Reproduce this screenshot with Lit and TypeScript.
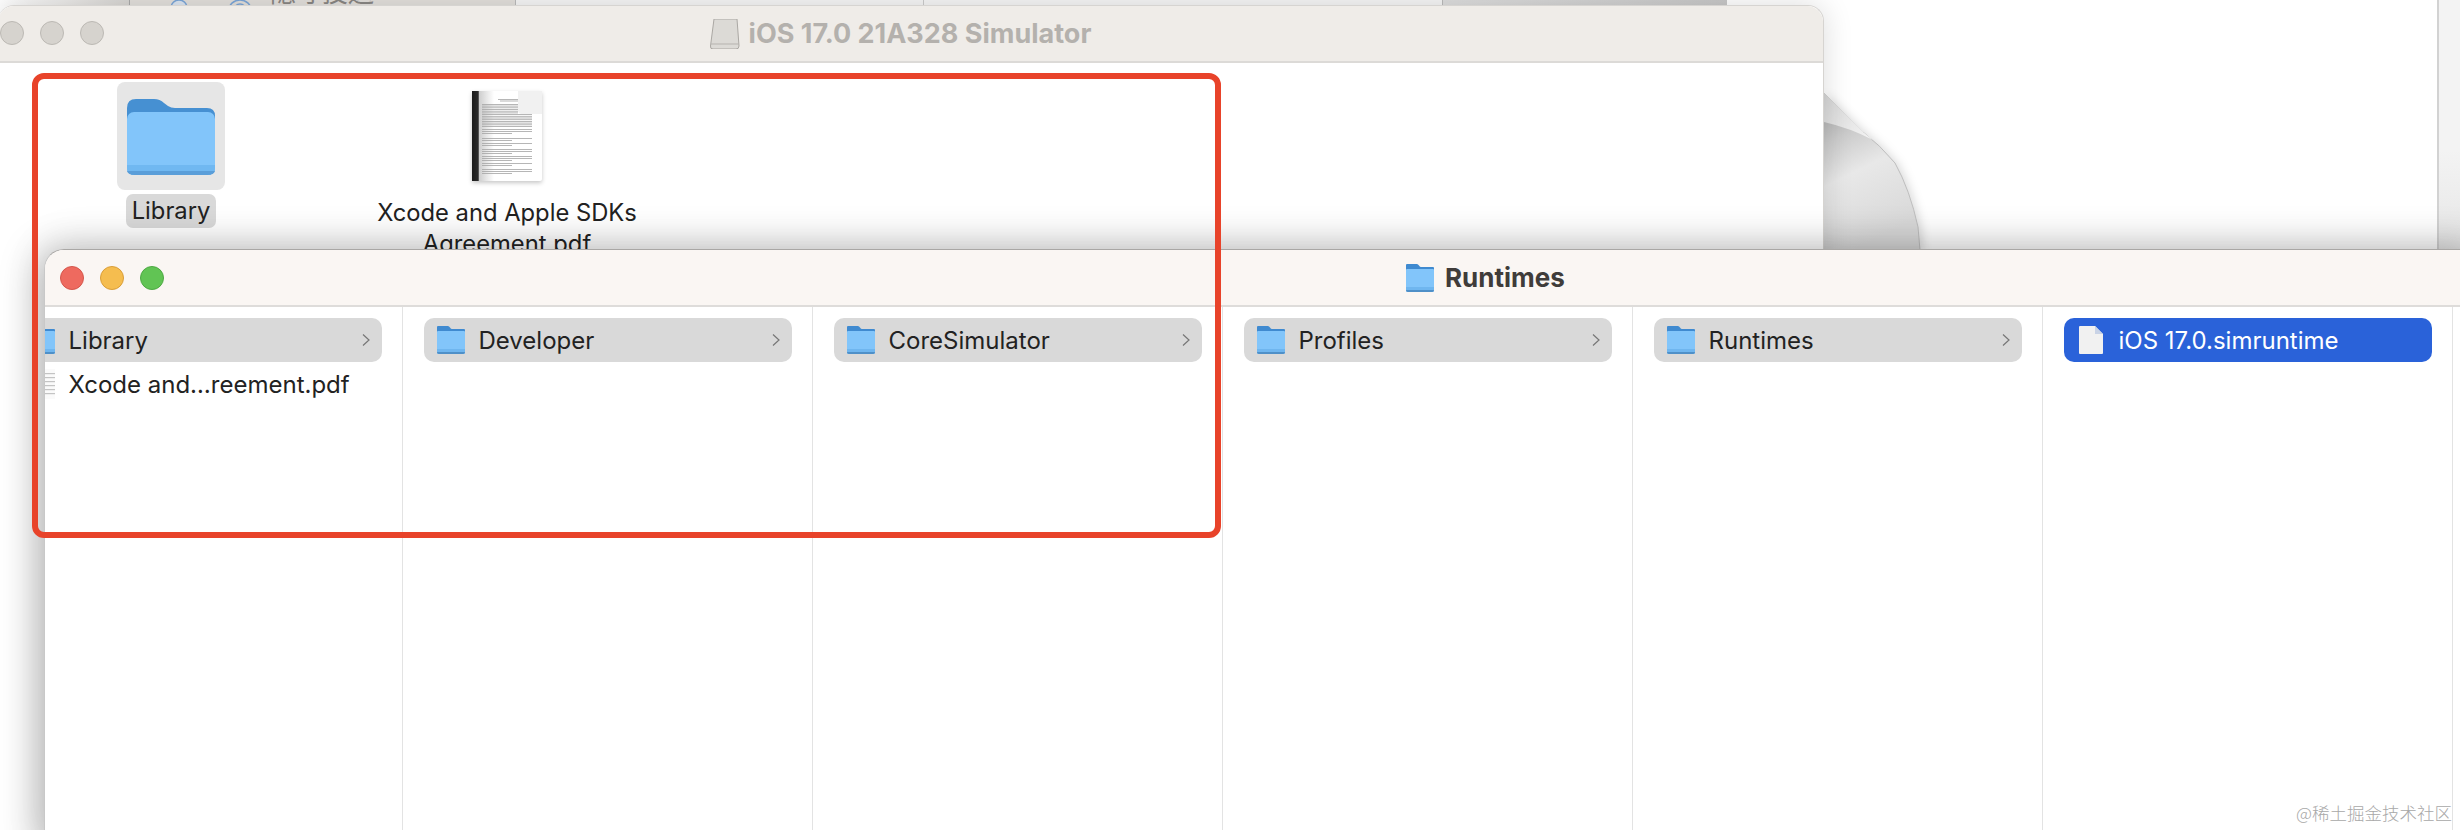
import { LitElement, html, css, svg } from "lit";
import { customElement } from "lit/decorators.js";

const folder = () => html`<svg class="bigf" viewBox="0 0 88 76">
  ${svg`<path d="M0 9 Q0 0 9 0 H27 Q33 0 37 4 L41 7 Q44 9 48 9 H80 Q88 9 88 17 V68 Q88 76 80 76 H8 Q0 76 0 68Z" fill="#4690d2"/>
  <rect x="0" y="13" width="88" height="63" rx="7" fill="#82c5fa"/>
  <path d="M0 66 H88 V69 Q88 76 80 76 H8 Q0 76 0 69Z" fill="#70b8f1"/>
  <path d="M0 72 Q1 76 8 76 H80 Q87 76 88 72Z" fill="#5a9ed9"/>`}
</svg>`;

const smallFolder = (cls: string) => html`<svg class=${cls} viewBox="0 0 28 28">
  ${svg`<path d="M0 1 Q0 0 1 0 H11 Q12 0 13 1.5 Q14 3 15 3 H27 Q28 3 28 4 V10 H0Z" fill="#3f8ad0"/>
  <path d="M0 6 Q0 5 1 5 H27 Q28 5 28 6 V26 Q28 28 26 28 H2 Q0 28 0 26Z" fill="#82c5fa"/>
  <path d="M0 23 H28 V26 Q28 28 26 28 H2 Q0 28 0 26Z" fill="#6fb6ef"/>
  <path d="M0 26 Q0 28 2 28 H26 Q28 28 28 26Z" fill="#4f90c8"/>`}
</svg>`;

const chevron = () => html`<svg class="chev" viewBox="0 0 8 12"><path d="M1 .5 L7 6 L1 11.5" fill="none" stroke="#777" stroke-width="1.2"/></svg>`;

// Page lines of the PDF thumbnail: [y, x, width]
const docLines: number[][] = [[8, 26, 24], [9.6, 28, 20]];
for (let y = 13; y < 36; y += 1.7) docLines.push([y, 10, y < 22 ? 36 : 50]);
for (const [a, b] of [[38, 44], [47, 50], [52, 56], [58, 63], [65, 70], [72, 76], [78, 83]]) {
  for (let y = a; y < b; y += 2) docLines.push([y, 10, y + 2 >= b ? 30 : 50]);
}

@customElement("app-root")
export class AppRoot extends LitElement {
  static styles = css`
    :host { display: block; position: relative; width: 2460px; height: 830px; overflow: hidden; background: #fff;
      font-family: Inter, "Liberation Sans", "Noto Sans CJK SC", sans-serif; color: #222; }
    .behind { position: absolute; left: 0; top: 0; width: 2460px; height: 6px; overflow: hidden; display: flex; }
    .seg { height: 6px; flex: none; box-sizing: border-box; }
    .s0 { width: 130px; background: linear-gradient(90deg, #fff, #d8d6d3); border-right: 1px solid #aaa; }
    .s1 { width: 386px; background: #e3e0dc; border-right: 1px solid #bbb; display: flex; align-items: flex-start; padding-left: 40px; }
    .s1 svg { flex: none; }
    .s1 svg.a { width: 18px; height: 6px; margin-right: 40px; }
    .s1 svg.b { width: 24px; height: 6px; margin-right: 18px; }
    .s1 span { font-size: 26px; line-height: 26px; color: #8a8784; margin-top: -20px; white-space: nowrap; }
    .s2 { width: 408px; background: #f6f6f6; border-right: 1px solid #ccc; }
    .s3 { width: 519px; background: #f6f6f6; border-right: 1px solid #bbb; }
    .s4 { width: 284px; background: linear-gradient(90deg, #dedede, #c8c8c8); }
    .rstrip { position: absolute; left: 2437px; top: 0; width: 23px; height: 250px; box-sizing: border-box; border-left: 2px solid #d2d2d2;
      background: linear-gradient(180deg, #f3f3f3, #f3f3f3 60%, #e6e6e6); }
    .curl { position: absolute; left: 1800px; top: 60px; width: 140px; height: 200px; filter: drop-shadow(3px 1px 5px rgba(0,0,0,.14)); }
    .back { position: absolute; left: -2px; top: 5px; width: 1826px; height: 900px; box-sizing: border-box; background: #fff;
      border-radius: 16px 16px 0 0; box-shadow: 0 0 30px rgba(0,0,0,.14); border: 1px solid #d6d4d1; border-width: 1px 1px 0 0; }
    .back .bar { height: 55px; background: #efece8; border-bottom: 2px solid #dcdad7; border-radius: 16px 16px 0 0;
      display: flex; align-items: center; justify-content: center; position: relative; }
    .lights { position: absolute; display: flex; gap: 16px; }
    .back .lights { left: 2px; top: 15px; }
    .light { width: 24px; height: 24px; box-sizing: border-box; border-radius: 50%; border: 1px solid #bcb9b4; background: #d6d3ce; }
    .title { display: flex; align-items: center; justify-content: center; gap: 9px; font-weight: 700; }
    .back .title { font-size: 27px; color: #b4b1ad; margin-right: 20px; }
    .drive { width: 30px; height: 30px; }
    .icons { display: flex; padding-top: 19px; }
    .desk-a { width: 190px; margin-left: 78px; display: flex; flex-direction: column; align-items: center; }
    .tile { width: 108px; height: 108px; background: #e6e6e6; border-radius: 8px; display: flex; align-items: center; justify-content: center; }
    .bigf { width: 88px; height: 76px; margin-top: 2px; }
    .lab { margin-top: 4px; padding: 0 6px; font-size: 23.75px; line-height: 34px; background: #d9d9d9; border-radius: 7px; }
    .desk-b { width: 330px; margin-left: 76px; display: flex; flex-direction: column; align-items: center; text-align: center; font-size: 23.75px; line-height: 31px; }
    .doc { width: 70px; height: 90px; margin: 9px 0 16px; filter: drop-shadow(0 2px 2px rgba(0,0,0,.22)); }
    .front { position: absolute; left: 44px; top: 249px; width: 2440px; height: 600px; background: #fff; border-radius: 20px 0 0 0;
      box-shadow: -6px 2px 38px rgba(0,0,0,.28), 0 -8px 44px rgba(0,0,0,.08); overflow: hidden; box-sizing: border-box; border-top: 1px solid #a9a7a5; border-left: 1px solid #c8c8c8; }
    .front .bar { height: 55px; background: #faf6f3; border-bottom: 2px solid #dedcda; position: relative; display: flex; align-items: center; }
    .front .lights { left: 15px; top: 16px; }
    .front .light.r { background: #ee6a5f; border-color: #d4574c; }
    .front .light.y { background: #f5bd4f; border-color: #d99e39; }
    .front .light.g { background: #61c454; border-color: #4ea944; }
    .front .title { position: absolute; left: 1361px; font-size: 26px; color: #3f3c3a; gap: 11px; }
    .tf { width: 28px; height: 28px; }
    .cols { display: flex; margin-left: -52px; height: 530px; }
    .col { width: 410px; flex: none; box-sizing: border-box; border-right: 1px solid #e3e3e3; padding: 11px 20px 0 21px; }
    .row { height: 44px; display: flex; align-items: center; padding: 0 12px 0 13px; border-radius: 10px; font-size: 24px; white-space: nowrap; }
    .row.sel { background: #d9d9d9; }
    .row.act { background: #2a62d9; color: #fff; }
    .row .name { flex: 1; margin-left: 13.5px; }
    .fi { width: 28px; height: 28px; flex: none; }
    .chev { width: 8px; height: 12px; flex: none; }
    .fileic { width: 24px; height: 28px; margin: 0 2px; flex: none; }
    .smalldoc { width: 28px; height: 30px; flex: none; }
    .red { position: absolute; left: 32px; top: 73px; width: 1189px; height: 465px; box-sizing: border-box; border: 6px solid #e8432a; border-radius: 12px; pointer-events: none; }
    .wm { position: absolute; right: 8px; bottom: 6px; font-family: "Noto Sans CJK SC", sans-serif; font-size: 17.5px; line-height: 22px; color: #a8a8a8; font-weight: 300; }
  `;

  private row(name: string) {
    return html`<div class="row sel">${smallFolder("fi")}<span class="name">${name}</span>${chevron()}</div>`;
  }

  render() {
    return html`
      <div class="behind">
        <div class="seg s0"></div>
        <div class="seg s1">
          <svg class="a" viewBox="0 0 18 6"><path d="M1 8 A8 8 0 0 1 17 8" fill="#dce6f2" stroke="#7ba6d8" stroke-width="1.5"/></svg>
          <svg class="b" viewBox="0 0 24 6"><path d="M1 10 A11 10 0 0 1 23 10" fill="none" stroke="#7ba6d8" stroke-width="1.5"/><path d="M6 10 A6 6 0 0 1 18 10" fill="none" stroke="#7ba6d8" stroke-width="1.5"/></svg>
          <span>隐守投送</span>
        </div>
        <div class="seg s2"></div>
        <div class="seg s3"></div>
        <div class="seg s4"></div>
      </div>
      <div class="rstrip"></div>
      <svg class="curl" viewBox="0 0 140 200">
        <defs>
          <linearGradient id="cg" x1="0" y1="0" x2=".3" y2="1"><stop offset="0" stop-color="#9c9c9c"/><stop offset=".3" stop-color="#cbcbcb"/><stop offset=".55" stop-color="#e8e8e8"/><stop offset="1" stop-color="#d8d8d8"/></linearGradient>
          <linearGradient id="fg" x1="0" y1="0" x2="1" y2="1"><stop offset="0" stop-color="#d4d4d4"/><stop offset="1" stop-color="#f4f4f4"/></linearGradient>
        </defs>
        <path d="M24 33 L63 72 Q80 85 95 103 Q110 130 118 167 L120 190 H24Z" fill="url(#cg)"/>
        <path d="M63 72 Q80 85 95 103 Q110 130 118 167 L120 190" fill="none" stroke="#bdbdbd" stroke-width="1"/>
        <path d="M24 33 L63 72 L73 80 Q50 68 24 62Z" fill="url(#fg)"/>
      </svg>
      <div class="back">
        <div class="bar">
          <div class="lights"><i class="light"></i><i class="light"></i><i class="light"></i></div>
          <div class="title">
            <svg class="drive" viewBox="0 0 30 30"><path d="M4 0 H27 L29 27 Q29 30 26 30 H3 Q0 30 0.5 27Z" fill="#dcdad6" stroke="#aaa7a3"/><path d="M1 25 H29" stroke="#b6b3af" stroke-width="1"/></svg>
            <span>iOS 17.0 21A328 Simulator</span>
          </div>
        </div>
        <div class="icons">
          <div class="desk-a"><div class="tile">${folder()}</div><span class="lab">Library</span></div>
          <div class="desk-b">
            <svg class="doc" viewBox="0 0 70 90">
              <defs><linearGradient id="sp" x1="0" x2="1" y1="0" y2="0"><stop offset="0" stop-color="#1c1c1c"/><stop offset=".28" stop-color="#2c2c2c"/><stop offset=".34" stop-color="#cfcfcf"/><stop offset="1" stop-color="#fff"/></linearGradient></defs>
              <rect width="70" height="90" rx="2" fill="#fff"/>
              <rect width="22" height="90" fill="url(#sp)"/>
              ${docLines.map(([y, x, w]) => svg`<rect x=${x} y=${y} width=${w} height=".8" fill="#a4a4a4"/>`)}
              <path d="M46 0 H70 V23 H50 Q46 23 46 19Z" fill="#f1f1f1"/>
            </svg>
            <span>Xcode and Apple SDKs<br />Agreement.pdf</span>
          </div>
        </div>
      </div>
      <div class="front">
        <div class="bar">
          <div class="lights"><i class="light r"></i><i class="light y"></i><i class="light g"></i></div>
          <div class="title">${smallFolder("tf")}<span>Runtimes</span></div>
        </div>
        <div class="cols">
          <div class="col">
            ${this.row("Library")}
            <div class="row">
              <svg class="smalldoc" viewBox="0 0 28 30"><rect width="28" height="30" fill="#fafafa"/>${[4, 8, 12, 16, 20, 24].map((y) => svg`<rect x="15" y=${y} width="13" height="1.2" fill="#c4c4c4"/>`)}</svg>
              <span class="name">Xcode and…reement.pdf</span>
            </div>
          </div>
          <div class="col">${this.row("Developer")}</div>
          <div class="col">${this.row("CoreSimulator")}</div>
          <div class="col">${this.row("Profiles")}</div>
          <div class="col">${this.row("Runtimes")}</div>
          <div class="col">
            <div class="row act">
              <svg class="fileic" viewBox="0 0 24 28"><path d="M1 0 H16 L24 8 V27 Q24 28 23 28 H1 Q0 28 0 27 V1 Q0 0 1 0Z" fill="#f1f1f1"/><path d="M16 0 L24 8 H16Z" fill="#c9d3e6"/></svg>
              <span class="name">iOS 17.0.simruntime</span>
            </div>
          </div>
        </div>
      </div>
      <div class="red"></div>
      <div class="wm">@稀土掘金技术社区</div>
    `;
  }
}
